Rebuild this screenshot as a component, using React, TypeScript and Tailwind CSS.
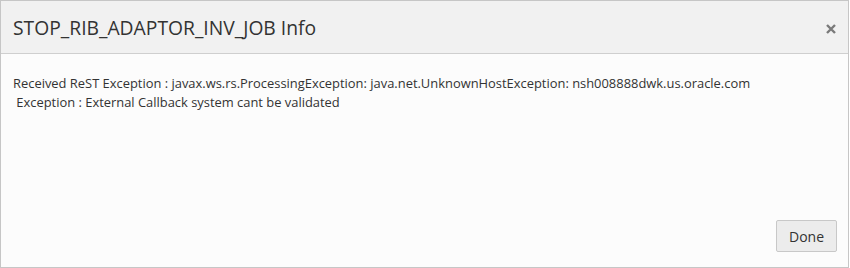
import React from "react";

export default function App() {
  return (
    <div className="w-[850px] h-[268px] bg-white" style={{ fontFamily: '"Open Sans", "Noto Sans", sans-serif' }}>
      <div className="w-[849px] h-[268px] border border-[#c6c6c6] bg-[#fcfcfc] flex flex-col">
        <div className="h-[53px] shrink-0 bg-[#f1f1f1] border-b border-[#cfcfcf] flex items-center justify-between pl-[12px] pr-[11px]">
          <div className="text-[19.3px] text-[#333333] leading-none pt-[2px]">STOP_RIB_ADAPTOR_INV_JOB Info</div>
          <button className="pt-[4px] mr-[1px]">
            <svg width="10" height="10" viewBox="0 0 10 10">
              <path d="M1 1 L9 9 M9 1 L1 9" stroke="#7a7a7a" strokeWidth="2.4" strokeLinecap="butt" />
            </svg>
          </button>
        </div>
        <div className="flex-1 pt-[20px] pl-[12px] text-[12.92px] leading-[19px] text-[#333333] whitespace-pre">
          <div>Received ReST Exception : javax.ws.rs.ProcessingException: java.net.UnknownHostException: nsh008888dwk.us.oracle.com</div>
          <div> Exception : External Callback system cant be validated</div>
        </div>
        <div className="flex justify-end pr-[11px] pb-[15px]">
          <button className="w-[61px] h-[32px] bg-[#ececec] border border-[#c8c8c8] rounded-[2px] text-[14px] text-[#333333]">Done</button>
        </div>
      </div>
    </div>
  );
}
